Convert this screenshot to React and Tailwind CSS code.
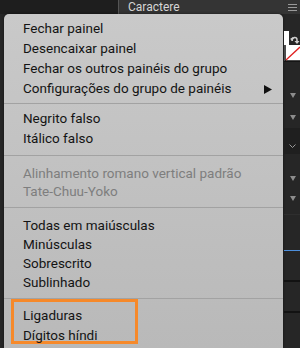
import React from 'react';

// Menu de contexto do painel "Caractere"
const groups = [
  { rows: ['Fechar painel', 'Desencaixar painel', 'Fechar os outros painéis do grupo', 'Configurações do grupo de painéis'], h: 'h-[20px]' },
  { rows: ['Negrito falso', 'Itálico falso'], h: 'h-[20px]' },
  { rows: ['Alinhamento romano vertical padrão', 'Tate-Chuu-Yoko'], h: 'h-[18px]', disabled: true },
  { rows: ['Todas em maiúsculas', 'Minúsculas', 'Sobrescrito', 'Sublinhado'], h: 'h-[19px]' },
];

const Row = ({ label, h, disabled, submenu }) => (
  <div className={`${h} flex items-center justify-between pl-[19px] pr-[11px] leading-none ${disabled ? 'text-[#7e7e7e]' : 'text-[#141414]'}`}>
    <span>{label}</span>
    {submenu && (
      <svg width="8" height="9" viewBox="0 0 8 9">
        <polygon points="0,0 8,4.5 0,9" fill="#111" />
      </svg>
    )}
  </div>
);

const Separator = ({ top, bottom }) => (
  <div className={`${top} ${bottom}`}>
    <div className="h-px bg-[#a2a2a2]" />
  </div>
);

const Tri = () => (
  <div className="flex justify-center pl-[1px]">
    <svg width="6" height="5" viewBox="0 0 6 5">
      <polygon points="0,0 6,0 3,5" fill="#8c8c8c" />
    </svg>
  </div>
);

export default function App() {
  return (
    <div
      className="w-[300px] h-[348px] overflow-hidden bg-[#262626] flex flex-col text-[13.5px]"
      style={{ fontFamily: 'Roboto, "Liberation Sans", Arial, sans-serif' }}
    >
      {/* barra de abas */}
      <div className="h-[14px] flex shrink-0">
        <div className="w-[118px] bg-[#1e1e1e]" />
        <div className="w-px bg-[#555]" />
        <div className="flex-1 bg-[#343434] flex items-center pl-[9px]">
          <span className="text-[12px] text-[#d6d6d6] leading-none -mt-[1px]">Caractere</span>
          <div className="ml-auto mr-[3px] flex flex-col gap-[2px]">
            <div className="w-[9px] h-px bg-[#9a9a9a]" />
            <div className="w-[9px] h-px bg-[#9a9a9a]" />
            <div className="w-[9px] h-px bg-[#9a9a9a]" />
          </div>
        </div>
      </div>

      <div className="flex flex-1 min-h-0">
        <div className="w-[4px]" />

        {/* menu */}
        <div className="w-[280px] rounded-t-[5px] bg-gradient-to-b from-[#c9c9c9] to-[#b9b9b9] pt-[5px] shadow-[0_0_3px_rgba(0,0,0,0.5)]">
          {groups[0].rows.map((r, i) => (
            <Row key={r} label={r} h={groups[0].h} submenu={i === 3} />
          ))}
          <Separator top="pt-[4px]" bottom="pb-[5px]" />
          {groups[1].rows.map(r => (
            <Row key={r} label={r} h={groups[1].h} />
          ))}
          <Separator top="pt-[6px]" bottom="pb-[9px]" />
          {groups[2].rows.map(r => (
            <Row key={r} label={r} h={groups[2].h} disabled />
          ))}
          <Separator top="pt-[6px]" bottom="pb-[8px]" />
          {groups[3].rows.map(r => (
            <Row key={r} label={r} h={groups[3].h} />
          ))}
          <Separator top="pt-[6px]" bottom="pb-[0px]" />
          <div className="ml-[7px] w-[127px] border-[3px] border-[#f6892a] pt-[5px] text-[#141414]">
            <div className="h-[18px] flex items-center pl-[9px] leading-none">Ligaduras</div>
            <div className="h-[16px] flex items-center pl-[9px] pt-[5px] leading-none">Dígitos híndi</div>
          </div>
        </div>

        {/* painel da direita */}
        <div className="flex-1 flex flex-col ml-px">
          <div className="h-[17px]" />
          <div className="h-[32px] flex">
            <svg width="16" height="32" viewBox="0 0 16 32">
              <rect x="0" y="0" width="5" height="14" fill="#fff" />
              <rect x="0" y="14" width="16" height="16" fill="#fff" />
              <path d="M1 14 V30 H16" stroke="#111" strokeWidth="1.5" fill="none" />
              <line x1="2" y1="29" x2="16" y2="16" stroke="#e02020" strokeWidth="1.3" />
              <path d="M8 10 C8 6 13 5 13 9 V12" stroke="#cfcfcf" strokeWidth="1.5" fill="none" />
              <polygon points="10.5,10 15.5,10 13,13" fill="#cfcfcf" />
              <polygon points="6,8 9,6 9,10" fill="#cfcfcf" />
            </svg>
          </div>
          <div className="h-[30px]" />
          <Tri />
          <div className="h-[17px]" />
          <Tri />
          <div className="h-[8px]" />
          <div className="h-[26px] bg-[#1f1f1f] flex items-center justify-center pt-[10px]">
            <svg width="7" height="4" viewBox="0 0 7 4">
              <polyline points="0.5,0.5 3.5,3.5 6.5,0.5" stroke="#9a9a9a" strokeWidth="1" fill="none" />
            </svg>
          </div>
          <div className="h-[22px]" />
          <Tri />
          <div className="h-[15px]" />
          <Tri />
          <div className="h-[14px] border-b border-[#2e2e2e]" />
          <div className="h-[35px]" />
          <div className="h-px bg-[#4d8fdc]" />
          <div className="h-[29px]" />
          <div className="h-[2px] bg-[#121212]" />
          <div className="h-[29px]" />
          <div className="h-[2px] bg-[#121212]" />
        </div>
      </div>
    </div>
  );
}
